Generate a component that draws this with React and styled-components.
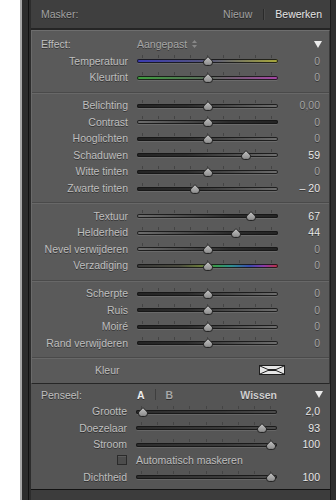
import React from "react";
import styled, { createGlobalStyle } from "styled-components";

const Global = createGlobalStyle`
  html, body { margin: 0; padding: 0; background: #fff; }
  body { font-family: "Liberation Sans", Arial, sans-serif; }
`;

const Page = styled.div`
  display: flex;
  width: 336px;
  height: 500px;
  background: #fff;
  overflow: hidden;
`;
const Gutter = styled.div`
  width: 20px;
  flex: none;
`;
const Frame = styled.div`
  flex: 1;
  display: flex;
  border-left: 2px solid #a6a6a6;
  background: #2c2c2c;
`;
const Rail = styled.div`
  width: 6px;
  flex: none;
  border-right: 1px solid #111;
  margin-right: 2px;
`;
const Column = styled.div`
  width: 299px;
  flex: none;
  display: flex;
  flex-direction: column;
`;
const RightEdge = styled.div`
  flex: 1;
  border-left: 1px solid #1b1b1b;
  background: #2f2f2f;
`;

const Header = styled.div`
  height: 28px;
  flex: none;
  display: flex;
  align-items: center;
  padding: 0 8px 0 10px;
  background: #3f3f3f;
  border-bottom: 2px solid #252525;
  font-size: 10.5px;
  color: #a2a2a2;
  text-shadow: 0 1px 0 rgba(0, 0, 0, 0.45);
`;
const Tabs = styled.div`
  margin-left: auto;
  display: flex;
  align-items: center;
  gap: 11px;
`;
const Tab = styled.span`
  color: ${(p) => (p.$active ? "#e6e6e6" : "#a2a2a2")};
`;
const TabSep = styled.span`
  width: 1px;
  height: 11px;
  background: #2a2a2a;
  box-shadow: 1px 0 0 #4a4a4a;
`;

const Panel = styled.div`
  flex: none;
  background: #5a5a5a;
  border: 1px solid;
  border-color: #6e6e6e #3a3a3a #262626 #6a6a6a;
`;
const Section = styled.div`
  padding: ${(p) => p.$pad || "4px 0 6px"};
  border-top: ${(p) => (p.$first ? "none" : "1px solid #4a4a4a")};
  box-shadow: ${(p) => (p.$first ? "none" : "inset 0 1px 0 #686868")};
`;

const Text = styled.span`
  font-size: 10.5px;
  color: #bfbfbf;
  text-shadow: 0 1px 0 rgba(0, 0, 0, 0.45);
  white-space: nowrap;
`;

const EffectRow = styled.div`
  height: 16.6px;
  display: flex;
  align-items: center;
  padding: 0 7px 0 9px;
`;
const EffectLabel = styled(Text)`
  width: 96px;
  flex: none;
`;
const Dim = styled(Text)`
  color: #a6a6a6;
  display: flex;
  align-items: center;
  gap: 5px;
`;
const Tri = styled.svg`
  margin-left: ${(p) => (p.$push ? "auto" : "0")};
  width: 8px;
  height: 7px;
  flex: none;
`;

const Row = styled.div`
  height: ${(p) => p.$h || 16.6}px;
  display: grid;
  grid-template-columns: 96px 141px 1fr;
  column-gap: 9px;
  align-items: center;
  padding-right: ${(p) => p.$pr || 9}px;
`;
const Label = styled(Text)`
  text-align: right;
`;
const Value = styled(Text)`
  text-align: right;
  color: ${(p) => (p.$bright ? "#e8e8e8" : "#a4a4a4")};
`;

const SliderCell = styled.div`
  height: 100%;
  display: flex;
  flex-direction: column;
  justify-content: center;
  padding-bottom: 3px;
  box-sizing: border-box;
`;
const Ticks = styled.div`
  height: 3px;
  margin-bottom: 1px;
  padding: 0 6px 0 5px;
  display: flex;
  justify-content: space-between;
`;
const Tick = styled.span`
  width: 1px;
  height: 3px;
  background: #444;
`;
const fills = {
  up: "linear-gradient(to right, #242424 0%, #2c2c2c 35%, #6e6e6e 100%)",
  down: "linear-gradient(to right, #6e6e6e 0%, #2c2c2c 65%, #242424 100%)",
  temp: "linear-gradient(to right, #3b3bb4, #55557a 50%, #a8a83a)",
  tint: "linear-gradient(to right, #3e9e3e, #5a6a5a 50%, #a645a6)",
  sat: "linear-gradient(to right, #3a3a3a 0%, #4a4a3e 30%, #6a7a3a 45%, #3a9a4a 55%, #2f8f8f 67%, #3a4ab0 80%, #8a3aa8 90%, #c03040 100%)",
  flat: "linear-gradient(to right, #2c2c2c, #3a3a3a 60%, #4c4c4c)",
};
const Track = styled.div`
  position: relative;
  height: 4px;
  border-radius: 2px;
  background: ${(p) => fills[p.$fill]};
  box-shadow: inset 0 0 0 1px rgba(22, 22, 22, 0.9), 0 1px 0 rgba(255, 255, 255, 0.1);
`;
const ThumbSvg = styled.svg`
  position: absolute;
  top: -3px;
  width: 11px;
  height: 10px;
  transform: translateX(-50%);
  overflow: visible;
`;

const Swatch = styled.svg`
  width: 26px;
  height: 10px;
  margin-left: auto;
  flex: none;
`;
const KleurRow = styled.div`
  height: 16.6px;
  display: flex;
  align-items: center;
  padding: 0 44px 0 63px;
`;

const Brush = styled.div`
  flex: none;
  background: #555555;
  padding: 2.8px 0 3.8px;
  border-bottom: 1px solid #121212;
`;
const BrushHead = styled.div`
  height: 16.4px;
  display: flex;
  align-items: center;
  padding: 0 7px 0 10px;
`;
const BrushLabel = styled(Text)`
  width: 96px;
  flex: none;
`;
const Bold = styled(Text)`
  font-weight: bold;
  color: ${(p) => p.$c};
`;
const BrushSep = styled.span`
  width: 1px;
  height: 11px;
  margin: 0 10px;
  background: #3e3e3e;
`;
const Wissen = styled(Bold)`
  margin-left: auto;
  margin-right: 38px;
`;
const Check = styled.span`
  justify-self: end;
  width: 10px;
  height: 10px;
  box-sizing: border-box;
  border: 1px solid #2a2a2a;
  background: #4c4c4c;
  box-shadow: inset 0 1px 0 #5a5a5a;
`;
const Filler = styled.div`
  flex: 1;
  background: #3c3c3c;
`;

function Thumb({ pos }) {
  return (
    <ThumbSvg viewBox="0 0 11 10" style={{ left: `calc(6px + (100% - 12px) * ${pos})` }}>
      <defs>
        <linearGradient id="tg" x1="0" y1="0" x2="0" y2="1">
          <stop offset="0" stopColor="#c4c4c4" />
          <stop offset="1" stopColor="#8a8a8a" />
        </linearGradient>
      </defs>
      <path
        d="M5.5 0.6 L9.9 5.1 L9.9 6.8 Q9.9 9.4 7.3 9.4 L3.7 9.4 Q1.1 9.4 1.1 6.8 L1.1 5.1 Z"
        fill="url(#tg)"
        stroke="#1c1c1c"
        strokeWidth="1"
        strokeLinejoin="round"
      />
    </ThumbSvg>
  );
}

function Slider({ fill, pos }) {
  return (
    <SliderCell>
      <Ticks>
        {Array.from({ length: 9 }).map((_, i) => (
          <Tick key={i} />
        ))}
      </Ticks>
      <Track $fill={fill}>
        <Thumb pos={pos} />
      </Track>
    </SliderCell>
  );
}

function SliderRow({ label, fill, pos, value, bright, pr, h }) {
  return (
    <Row $pr={pr} $h={h}>
      <Label>{label}</Label>
      <Slider fill={fill} pos={pos} />
      <Value $bright={bright}>{value}</Value>
    </Row>
  );
}

const Down = ({ push }) => (
  <Tri viewBox="0 0 8 7" $push={push}>
    <polygon points="0,0 8,0 4,7" fill="#ececec" />
  </Tri>
);

const groups = [
  [
    ["Belichting", "up", 0.5, "0,00"],
    ["Contrast", "down", 0.5, "0"],
    ["Hooglichten", "up", 0.5, "0"],
    ["Schaduwen", "up", 0.795, "59", true],
    ["Witte tinten", "up", 0.5, "0"],
    ["Zwarte tinten", "up", 0.4, "\u2013 20", true],
  ],
  [
    ["Textuur", "down", 0.835, "67", true],
    ["Helderheid", "down", 0.72, "44", true],
    ["Nevel verwijderen", "down", 0.5, "0"],
    ["Verzadiging", "sat", 0.5, "0"],
  ],
  [
    ["Scherpte", "up", 0.5, "0"],
    ["Ruis", "up", 0.5, "0"],
    ["Moiré", "up", 0.5, "0"],
    ["Rand verwijderen", "up", 0.5, "0"],
  ],
];

export default function App() {
  return (
    <>
      <Global />
      <Page>
        <Gutter />
        <Frame>
          <Rail />
          <Column>
            <Header>
              <span>Masker:</span>
              <Tabs>
                <Tab>Nieuw</Tab>
                <TabSep />
                <Tab $active>Bewerken</Tab>
              </Tabs>
            </Header>
            <Panel>
              <Section $first $pad="5px 0 6px">
                <EffectRow>
                  <EffectLabel>Effect:</EffectLabel>
                  <Dim>
                    Aangepast
                    <svg width="5" height="8" viewBox="0 0 5 8">
                      <polygon points="0,3 5,3 2.5,0" fill="#888" />
                      <polygon points="0,5 5,5 2.5,8" fill="#888" />
                    </svg>
                  </Dim>
                  <Down push />
                </EffectRow>
                <SliderRow label="Temperatuur" fill="temp" pos={0.5} value="0" />
                <SliderRow label="Kleurtint" fill="tint" pos={0.5} value="0" />
              </Section>
              {groups.map((g, gi) => (
                <Section key={gi}>
                  {g.map(([l, f, p, v, b]) => (
                    <SliderRow key={l} label={l} fill={f} pos={p} value={v} bright={b} />
                  ))}
                </Section>
              ))}
              <Section $pad="3.5px 0 4.7px">
                <KleurRow>
                  <Text>Kleur</Text>
                  <Swatch viewBox="0 0 26 10">
                    <rect x="0.5" y="0.5" width="25" height="9" fill="#e6e6e6" stroke="#1e1e1e" />
                    <polyline points="1,1 9,4.5 17,4.5 25,1" fill="none" stroke="#222" strokeWidth="1" />
                    <polyline points="1,9 9,5.5 17,5.5 25,9" fill="none" stroke="#222" strokeWidth="1" />
                  </Swatch>
                </KleurRow>
              </Section>
            </Panel>
            <Brush>
              <BrushHead>
                <BrushLabel>Penseel:</BrushLabel>
                <Bold $c="#ededed">A</Bold>
                <BrushSep />
                <Bold $c="#a8a8a8">B</Bold>
                <Wissen $c="#cfcfcf">Wissen</Wissen>
                <Down />
              </BrushHead>
              <SliderRow label="Grootte" fill="flat" pos={0.01} value="2,0" bright pr={10} h={16.4} />
              <SliderRow label="Doezelaar" fill="flat" pos={0.93} value="93" bright pr={10} h={16.4} />
              <SliderRow label="Stroom" fill="flat" pos={1} value="100" bright pr={10} h={16.4} />
              <Row $pr={10} $h={16.4}>
                <Check />
                <Text>Automatisch maskeren</Text>
              </Row>
              <SliderRow label="Dichtheid" fill="flat" pos={1} value="100" bright pr={10} h={16.4} />
            </Brush>
            <Filler />
          </Column>
          <RightEdge />
        </Frame>
      </Page>
    </>
  );
}
